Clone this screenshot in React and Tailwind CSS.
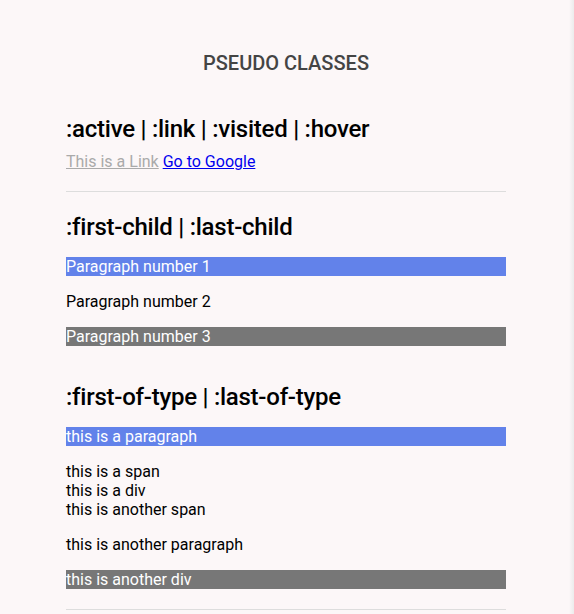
export default function App() {
  return (
    <div className="min-h-[614px] bg-[linear-gradient(to_left,#ececec_0px,#fcf7f8_5px)] pr-[2px] font-['Roboto',sans-serif] text-base text-black">
      <div className="mx-auto w-[440px] pt-[51px]">
        <h1 className="text-center text-[20px] font-medium leading-[24px] text-[#444]">PSEUDO CLASSES</h1>

        <section className="mt-[40px]">
          <h2 className="text-[24px] font-medium leading-[28px] tracking-[-0.25px]">:active | :link | :visited | :hover</h2>
          <p className="mt-[9px] leading-[19px]">
            <a className="text-[#aaa] underline">This is a Link</a>{" "}
            <a className="text-[#0000ee] underline">Go to Google</a>
          </p>
        </section>
        <hr className="mt-[20px] border-t border-[#ddd]" />

        <section className="mt-[21px]">
          <h2 className="text-[24px] font-medium leading-[28px] tracking-[-0.25px]">:first-child | :last-child</h2>
          <div className="mt-[16px] flex flex-col gap-[16px]">
            <p className="bg-[#6282ea] leading-[19px] text-white">Paragraph number 1</p>
            <p className="leading-[19px]">Paragraph number 2</p>
            <p className="bg-[#777] leading-[19px] text-white">Paragraph number 3</p>
          </div>
        </section>

        <section className="mt-[37px]">
          <h2 className="text-[24px] font-medium leading-[28px] tracking-[-0.25px]">:first-of-type | :last-of-type</h2>
          <div className="mt-[16px] flex flex-col gap-[16px]">
            <p className="bg-[#6282ea] leading-[19px] text-white">this is a paragraph</p>
            <div className="leading-[19px]">
              <div>this is a span</div>
              <div>this is a div</div>
              <div>this is another span</div>
            </div>
            <p className="leading-[19px]">this is another paragraph</p>
            <div className="bg-[#777] leading-[19px] text-white">this is another div</div>
          </div>
        </section>
        <hr className="mt-[20px] border-t border-[#ddd]" />
      </div>
    </div>
  );
}
